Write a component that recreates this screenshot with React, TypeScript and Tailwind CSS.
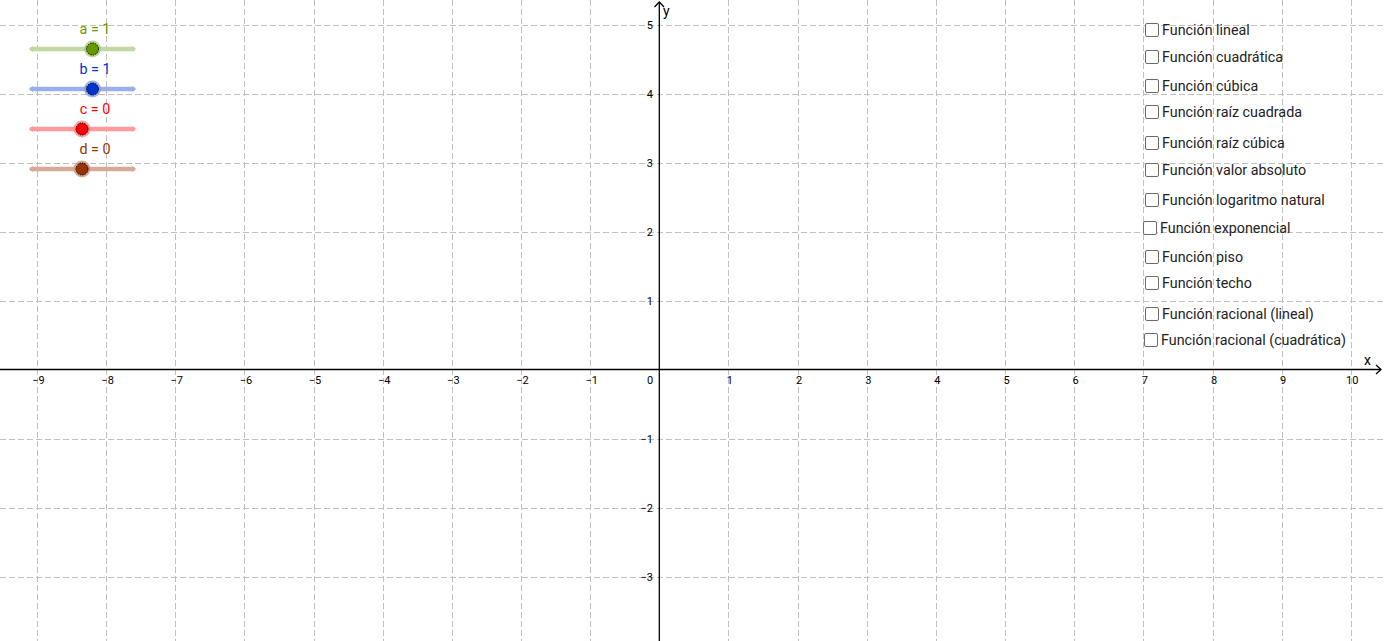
import React from 'react';

const OX = 659.3;
const OY = 370;
const UX = 69.15;
const UY = 69.1;

const xTicks = [-9, -8, -7, -6, -5, -4, -3, -2, -1, 1, 2, 3, 4, 5, 6, 7, 8, 9, 10];
const yTicks = [-3, -2, -1, 1, 2, 3, 4, 5];

const sliders = [
  { label: 'a = 1', y: 49, knob: 92.5, color: '#669900', track: '#c2d8a3', halo: '#a9c77f' },
  { label: 'b = 1', y: 89, knob: 92.5, color: '#0033cc', track: '#9aaeea', halo: '#7f95e0' },
  { label: 'c = 0', y: 129, knob: 82, color: '#ff0000', track: '#ff9b9b', halo: '#ff7f7f' },
  { label: 'd = 0', y: 169, knob: 82, color: '#993300', track: '#d6aa96', halo: '#c98f75' },
];

const checks = [
  { text: 'Función lineal', gap: 'mt-0' },
  { text: 'Función cuadrática', gap: 'mt-[11px]' },
  { text: 'Función cúbica', gap: 'mt-[13px]' },
  { text: 'Función raíz cuadrada', gap: 'mt-[10px]' },
  { text: 'Función raíz cúbica', gap: 'mt-[15px]' },
  { text: 'Función valor absoluto', gap: 'mt-[11px]' },
  { text: 'Función logaritmo natural', gap: 'mt-[14px]' },
  { text: 'Función exponencial', gap: 'mt-[12px] -ml-[2px]' },
  { text: 'Función piso', gap: 'mt-[13px]' },
  { text: 'Función techo', gap: 'mt-[10px]' },
  { text: 'Función racional (lineal)', gap: 'mt-[15px]' },
  { text: 'Función racional (cuadrática)', gap: 'mt-[10px] -ml-[1px]' },
];

const minus = (n: number) => (n < 0 ? '\u2212' + Math.abs(n) : String(n));

function Graph() {
  return (
    <svg width={1384} height={641} className="absolute inset-0" style={{ fontFamily: 'Roboto, "Liberation Sans", sans-serif' }}>
      {/* grid */}
      <g stroke="#c0c0c0" strokeWidth={1} strokeDasharray="6 3">
        {xTicks.map(k => (
          <line key={'vx' + k} x1={Math.round(OX + k * UX) + 0.5} y1={0} x2={Math.round(OX + k * UX) + 0.5} y2={641} />
        ))}
        {yTicks.map(k => (
          <line key={'hy' + k} x1={0} y1={Math.round(OY - k * UY) + 0.5} x2={1384} y2={Math.round(OY - k * UY) + 0.5} />
        ))}
      </g>

      {/* axes */}
      <g stroke="#000" strokeWidth={1.3} fill="none">
        <line x1={0} y1={OY - 0.5} x2={1381} y2={OY - 0.5} />
        <polyline points="1376,365 1381,369.5 1376,374" />
        <line x1={OX} y1={2} x2={OX} y2={641} />
        <polyline points="654.5,7 659.3,2 664,7" />
      </g>

      {/* tick labels */}
      <g fontSize={11} fill="#000">
        {xTicks.map(k => (
          <text key={'tx' + k} x={OX + k * UX + 1.5} y={384} textAnchor="middle">{minus(k)}</text>
        ))}
        <text x={650} y={384} textAnchor="middle">0</text>
        {yTicks.map(k => (
          <text key={'ty' + k} x={653} y={OY - k * UY + 4} textAnchor="end">{minus(k)}</text>
        ))}
      </g>
      <text x={663} y={16} fontSize={14} fill="#000">y</text>
      <text x={1364} y={365} fontSize={14} fill="#000">x</text>

      {/* sliders */}
      {sliders.map(s => (
        <g key={s.label}>
          <line x1={32} y1={s.y} x2={133} y2={s.y} stroke={s.track} strokeWidth={4.5} strokeLinecap="round" />
          <polyline points={`33,${s.y - 2.5} 29.5,${s.y} 33,${s.y + 2.5}`} fill={s.track} stroke={s.track} strokeWidth={1} />
          <polyline points={`132,${s.y - 2.5} 135.5,${s.y} 132,${s.y + 2.5}`} fill={s.track} stroke={s.track} strokeWidth={1} />
          <circle cx={s.knob} cy={s.y} r={8.5} fill={s.halo} opacity={0.75} />
          <circle cx={s.knob} cy={s.y} r={6} fill={s.color} stroke="#000" strokeWidth={1} strokeDasharray="1.5 1" />
          <text x={95} y={s.y - 15} fontSize={14.3} fill={s.color} textAnchor="middle">{s.label}</text>
        </g>
      ))}
    </svg>
  );
}

export default function App() {
  return (
    <div className="relative w-[1384px] h-[641px] overflow-hidden bg-white">
      <Graph />
      <div className="absolute left-[1145px] top-[22px] flex flex-col font-['Roboto','Liberation_Sans',sans-serif] text-[14.3px] text-[#222222]">
        {checks.map(c => (
          <label key={c.text} className={'flex items-center h-[16px] gap-[3px] ' + c.gap}>
            <span className="w-[14px] h-[14px] border border-[#6b6b6b] rounded-[2px] bg-white shrink-0" />
            <span className="leading-none whitespace-nowrap">{c.text}</span>
          </label>
        ))}
      </div>
    </div>
  );
}
